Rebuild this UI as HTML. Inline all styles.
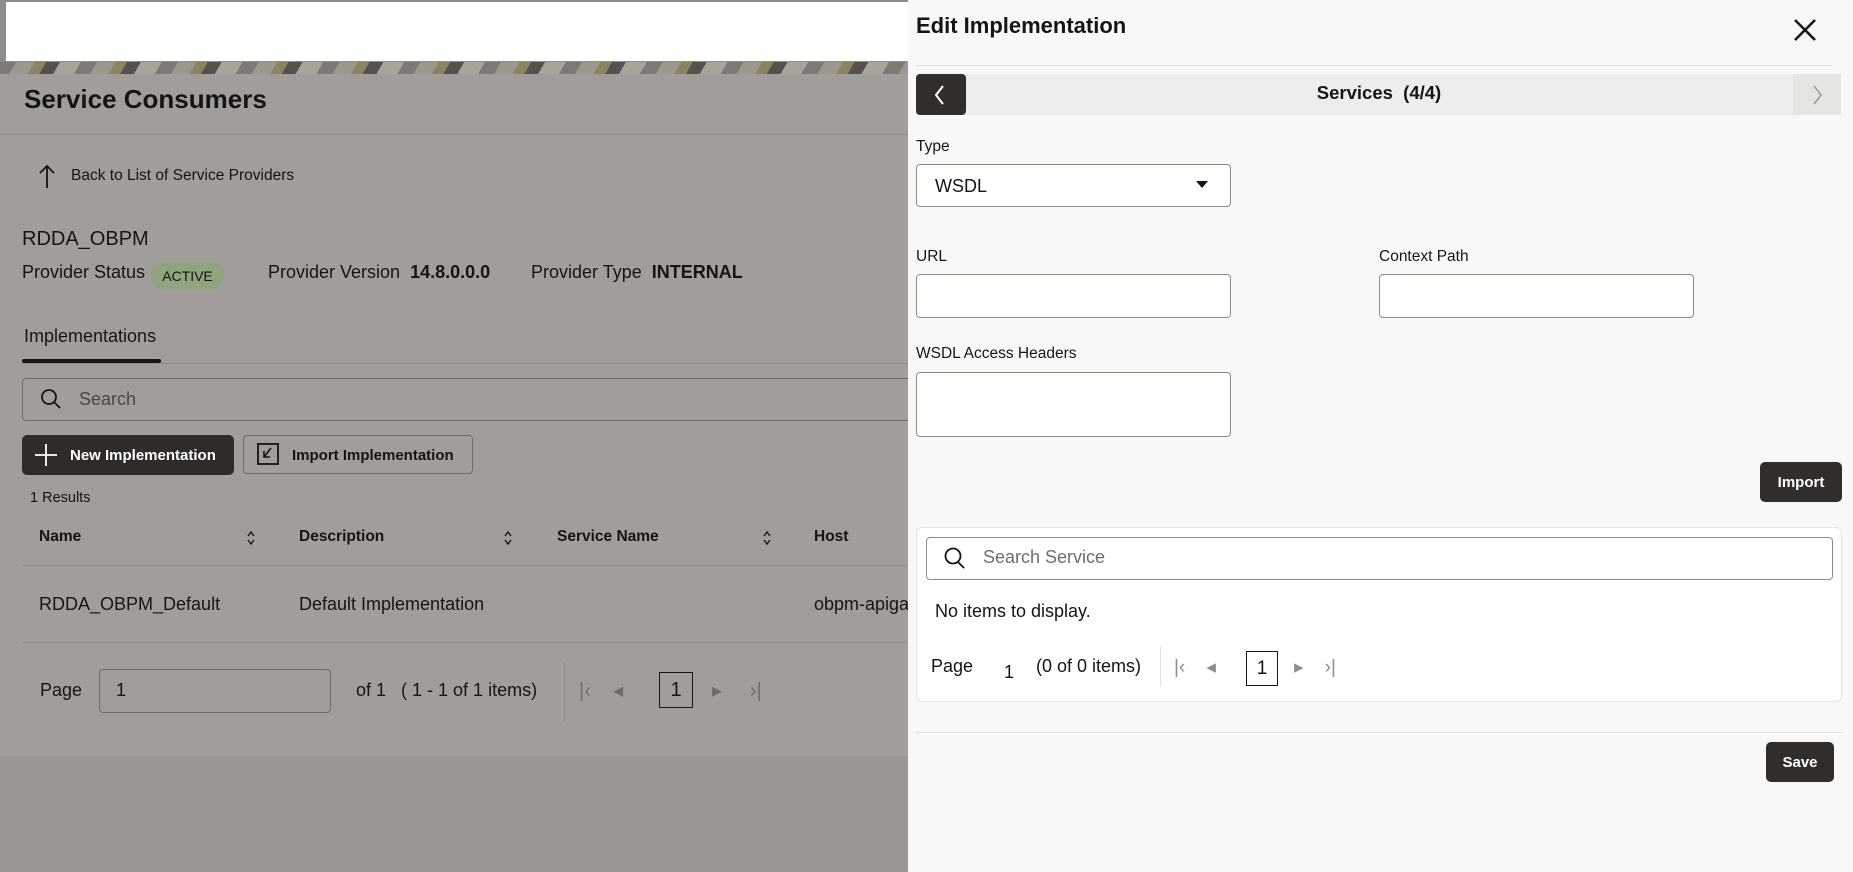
<!DOCTYPE html>
<html><head><meta charset="utf-8"><style>
*{box-sizing:border-box;margin:0;padding:0}
body{width:1853px;height:872px;overflow:hidden;position:relative;background:#9a9795;font-family:"Liberation Sans",sans-serif;color:#161513}
.a{position:absolute;white-space:nowrap}
.inp{position:absolute;background:#fff;border:1px solid #8f8b87;border-radius:4px}
.btn{position:absolute;background:#312d2a;color:#fff;border-radius:5px;font-weight:bold;font-size:15px;display:flex;align-items:center;justify-content:center}
</style></head><body>
<!-- left background -->
<div class="a" style="left:0;top:0;width:910px;height:62px;background:#8e8c8e"></div>
<div class="a" style="left:6px;top:2px;width:902px;height:59px;background:#fff"></div>
<div class="a" style="left:0;top:62px;width:910px;height:12px;background:repeating-linear-gradient(120deg,#7d7a74 0 14px,#9b9890 14px 30px,#8c8460 30px 40px,#55524e 40px 52px,#a8a49c 52px 70px)"></div>
<div class="a" style="left:0;top:74px;width:910px;height:682px;background:#a09d9b"></div>
<div class="a" style="left:24px;top:84px;font-size:26px;font-weight:bold">Service Consumers</div>
<div class="a" style="left:0;top:134px;width:910px;height:1px;background:#8f8c8a"></div>
<svg class="a" style="left:38px;top:163px" width="18" height="26" viewBox="0 0 18 26"><path d="M9 25V3M2 10L9 3L16 10" stroke="#161513" stroke-width="1.8" fill="none"/></svg>
<div class="a" style="left:71px;top:167px;font-size:15.5px">Back to List of Service Providers</div>
<div class="a" style="left:22px;top:228px;font-size:20px">RDDA_OBPM</div>
<div class="a" style="left:22px;top:262px;font-size:18px">Provider Status</div>
<div class="a" style="left:151px;top:262px;width:73px;height:27px;border-radius:14px;background:#8fa47f;font-size:14px;display:flex;align-items:center;justify-content:center">ACTIVE</div>
<div class="a" style="left:268px;top:262px;font-size:18px">Provider Version&nbsp; <b>14.8.0.0.0</b></div>
<div class="a" style="left:531px;top:262px;font-size:18px">Provider Type&nbsp; <b>INTERNAL</b></div>
<div class="a" style="left:24px;top:326px;font-size:18px">Implementations</div>
<div class="a" style="left:22px;top:363px;width:888px;height:1px;background:#8f8c8a"></div>
<div class="a" style="left:22px;top:359px;width:139px;height:4px;background:#161513;border-radius:2px"></div>
<div class="a" style="left:22px;top:378px;width:900px;height:43px;border:1px solid #6f6c6a;border-radius:4px;background:#a09d9b"></div>
<svg class="a" style="left:40px;top:388px" width="22" height="22" viewBox="0 0 22 22"><circle cx="9" cy="9" r="7" stroke="#161513" stroke-width="1.8" fill="none"/><path d="M14 14L20 20" stroke="#161513" stroke-width="1.8"/></svg>
<div class="a" style="left:79px;top:389px;font-size:18px;color:#4a4745">Search</div>
<div class="btn" style="left:22px;top:435px;width:212px;height:40px;justify-content:flex-start;padding-left:48px;background:#2f2b29">New Implementation</div>
<svg class="a" style="left:34px;top:443px" width="24" height="24"><path d="M12 1V23M1 12H23" stroke="#fff" stroke-width="1.8"/></svg>
<div class="a" style="left:243px;top:435px;width:230px;height:39px;border:1px solid #6f6c6a;border-radius:4px;font-size:15px;font-weight:bold;padding:11px 0 0 48px">Import Implementation</div>
<svg class="a" style="left:257px;top:443px" width="22" height="22"><rect x="1" y="1" width="20" height="20" fill="none" stroke="#161513" stroke-width="1.8"/><path d="M14 5L7 14M7 8V14H13" stroke="#161513" stroke-width="1.6" fill="none"/></svg>
<div class="a" style="left:30px;top:490px;font-size:14.5px">1 Results</div>
<div class="a" style="left:39px;top:528px;font-size:15.5px;font-weight:bold">Name</div>
<div class="a" style="left:299px;top:528px;font-size:15.5px;font-weight:bold">Description</div>
<div class="a" style="left:557px;top:528px;font-size:15.5px;font-weight:bold">Service Name</div>
<div class="a" style="left:814px;top:528px;font-size:15.5px;font-weight:bold">Host</div>
<svg class="a" style="left:246px;top:529px" width="10" height="18"><path d="M2 7L5 3L8 7M2 11L5 15L8 11" stroke="#161513" stroke-width="1.4" fill="none"/></svg>
<svg class="a" style="left:503px;top:529px" width="10" height="18"><path d="M2 7L5 3L8 7M2 11L5 15L8 11" stroke="#161513" stroke-width="1.4" fill="none"/></svg>
<svg class="a" style="left:762px;top:529px" width="10" height="18"><path d="M2 7L5 3L8 7M2 11L5 15L8 11" stroke="#161513" stroke-width="1.4" fill="none"/></svg>
<div class="a" style="left:22px;top:565px;width:888px;height:1px;background:#8f8c8a"></div>
<div class="a" style="left:39px;top:594px;font-size:18px">RDDA_OBPM_Default</div>
<div class="a" style="left:299px;top:594px;font-size:18px">Default Implementation</div>
<div class="a" style="left:814px;top:594px;font-size:18px">obpm-apiga</div>
<div class="a" style="left:22px;top:642px;width:888px;height:1px;background:#8f8c8a"></div>
<div class="a" style="left:40px;top:680px;font-size:18px">Page</div>
<div class="a" style="left:99px;top:669px;width:232px;height:44px;border:1px solid #6f6c6a;border-radius:4px;font-size:18px;padding:10px 0 0 16px">1</div>
<div class="a" style="left:356px;top:680px;font-size:18px">of 1 &nbsp;&nbsp;( 1 - 1 of 1 items)</div>
<div class="a" style="left:564px;top:662px;width:1px;height:60px;background:#908d8b"></div>
<div class="a" style="left:579px;top:678px;font-size:20px;color:#6e6b69">|&lsaquo;&nbsp;&nbsp;&nbsp; &#9666;</div>
<div class="a" style="left:659px;top:672px;width:34px;height:36px;border:1.5px solid #161513;font-size:20px;text-align:center;padding-top:6px">1</div>
<div class="a" style="left:712px;top:678px;font-size:20px;color:#6e6b69">&#9656;&nbsp;&nbsp;&nbsp;&nbsp; &rsaquo;|</div>
<!-- panel -->
<div class="a" style="left:908px;top:0;width:945px;height:872px;background:#f9f8f6"></div>
<div class="a" style="left:916px;top:13px;font-size:22px;font-weight:bold">Edit Implementation</div>
<svg class="a" style="left:1793px;top:18px" width="24" height="24"><path d="M2 2L22 22M22 2L2 22" stroke="#161513" stroke-width="2.6"/></svg>
<div class="a" style="left:916px;top:65px;width:916px;height:1px;background:#e0ddd9"></div>
<div class="a" style="left:916px;top:74px;width:925px;height:41px;background:#efedeb"></div>
<div class="a" style="left:1793px;top:74px;width:48px;height:41px;background:#e7e5e2"></div>
<div class="a" style="left:916px;top:74px;width:50px;height:41px;background:#312d2a;border-radius:4px"></div>
<svg class="a" style="left:932px;top:84px" width="16" height="22"><path d="M11 2L4 11L11 20" stroke="#fff" stroke-width="2" fill="none"/></svg>
<svg class="a" style="left:1810px;top:84px" width="16" height="22"><path d="M4 2L11 11L4 20" stroke="#9a9795" stroke-width="1.5" fill="none"/></svg>
<div class="a" style="left:1379px;top:82px;transform:translateX(-50%);font-size:18.5px;font-weight:bold">Services &nbsp;(4/4)</div>
<div class="a" style="left:916px;top:138px;font-size:15.5px">Type</div>
<div class="inp" style="left:916px;top:164px;width:315px;height:43px;font-size:18px;padding:11px 0 0 18px">WSDL</div>
<svg class="a" style="left:1196px;top:181px" width="12" height="8"><path d="M0 0H12L6 7Z" fill="#161513"/></svg>
<div class="a" style="left:916px;top:248px;font-size:15.5px">URL</div>
<div class="inp" style="left:916px;top:274px;width:315px;height:44px"></div>
<div class="a" style="left:1379px;top:248px;font-size:15.5px">Context Path</div>
<div class="inp" style="left:1379px;top:274px;width:315px;height:44px"></div>
<div class="a" style="left:916px;top:345px;font-size:15.5px">WSDL Access Headers</div>
<div class="inp" style="left:916px;top:372px;width:315px;height:65px"></div>
<div class="btn" style="left:1760px;top:462px;width:82px;height:40px">Import</div>
<div class="a" style="left:916px;top:527px;width:926px;height:175px;background:#fff;border:1px solid #e7e5e2;border-radius:6px"></div>
<div class="inp" style="left:926px;top:537px;width:907px;height:43px;border-color:#8f8b87"></div>
<svg class="a" style="left:943px;top:546px" width="24" height="24"><circle cx="10" cy="10" r="7.5" stroke="#161513" stroke-width="1.8" fill="none"/><path d="M15 16L21 22" stroke="#161513" stroke-width="1.8"/></svg>
<div class="a" style="left:983px;top:547px;font-size:18px;color:#6f6c6a">Search Service</div>
<div class="a" style="left:935px;top:601px;font-size:18px">No items to display.</div>
<div class="a" style="left:931px;top:656px;font-size:18px">Page</div>
<div class="a" style="left:1004px;top:662px;font-size:18px">1</div>
<div class="a" style="left:1036px;top:656px;font-size:18px">(0 of 0 items)</div>
<div class="a" style="left:1160px;top:646px;width:1px;height:40px;background:#e3e1de"></div>
<div class="a" style="left:1174px;top:656px;font-size:19px;color:#8f8c8a">|&lsaquo;&nbsp;&nbsp;&nbsp; &#9666;</div>
<div class="a" style="left:1246px;top:651px;width:32px;height:35px;border:1.5px solid #161513;font-size:19px;text-align:center;padding-top:6px">1</div>
<div class="a" style="left:1294px;top:656px;font-size:19px;color:#8f8c8a">&#9656;&nbsp;&nbsp;&nbsp; &rsaquo;|</div>
<div class="a" style="left:916px;top:732px;width:926px;height:1px;background:#e0ddd9"></div>
<div class="btn" style="left:1766px;top:742px;width:68px;height:40px">Save</div>
</body></html>
